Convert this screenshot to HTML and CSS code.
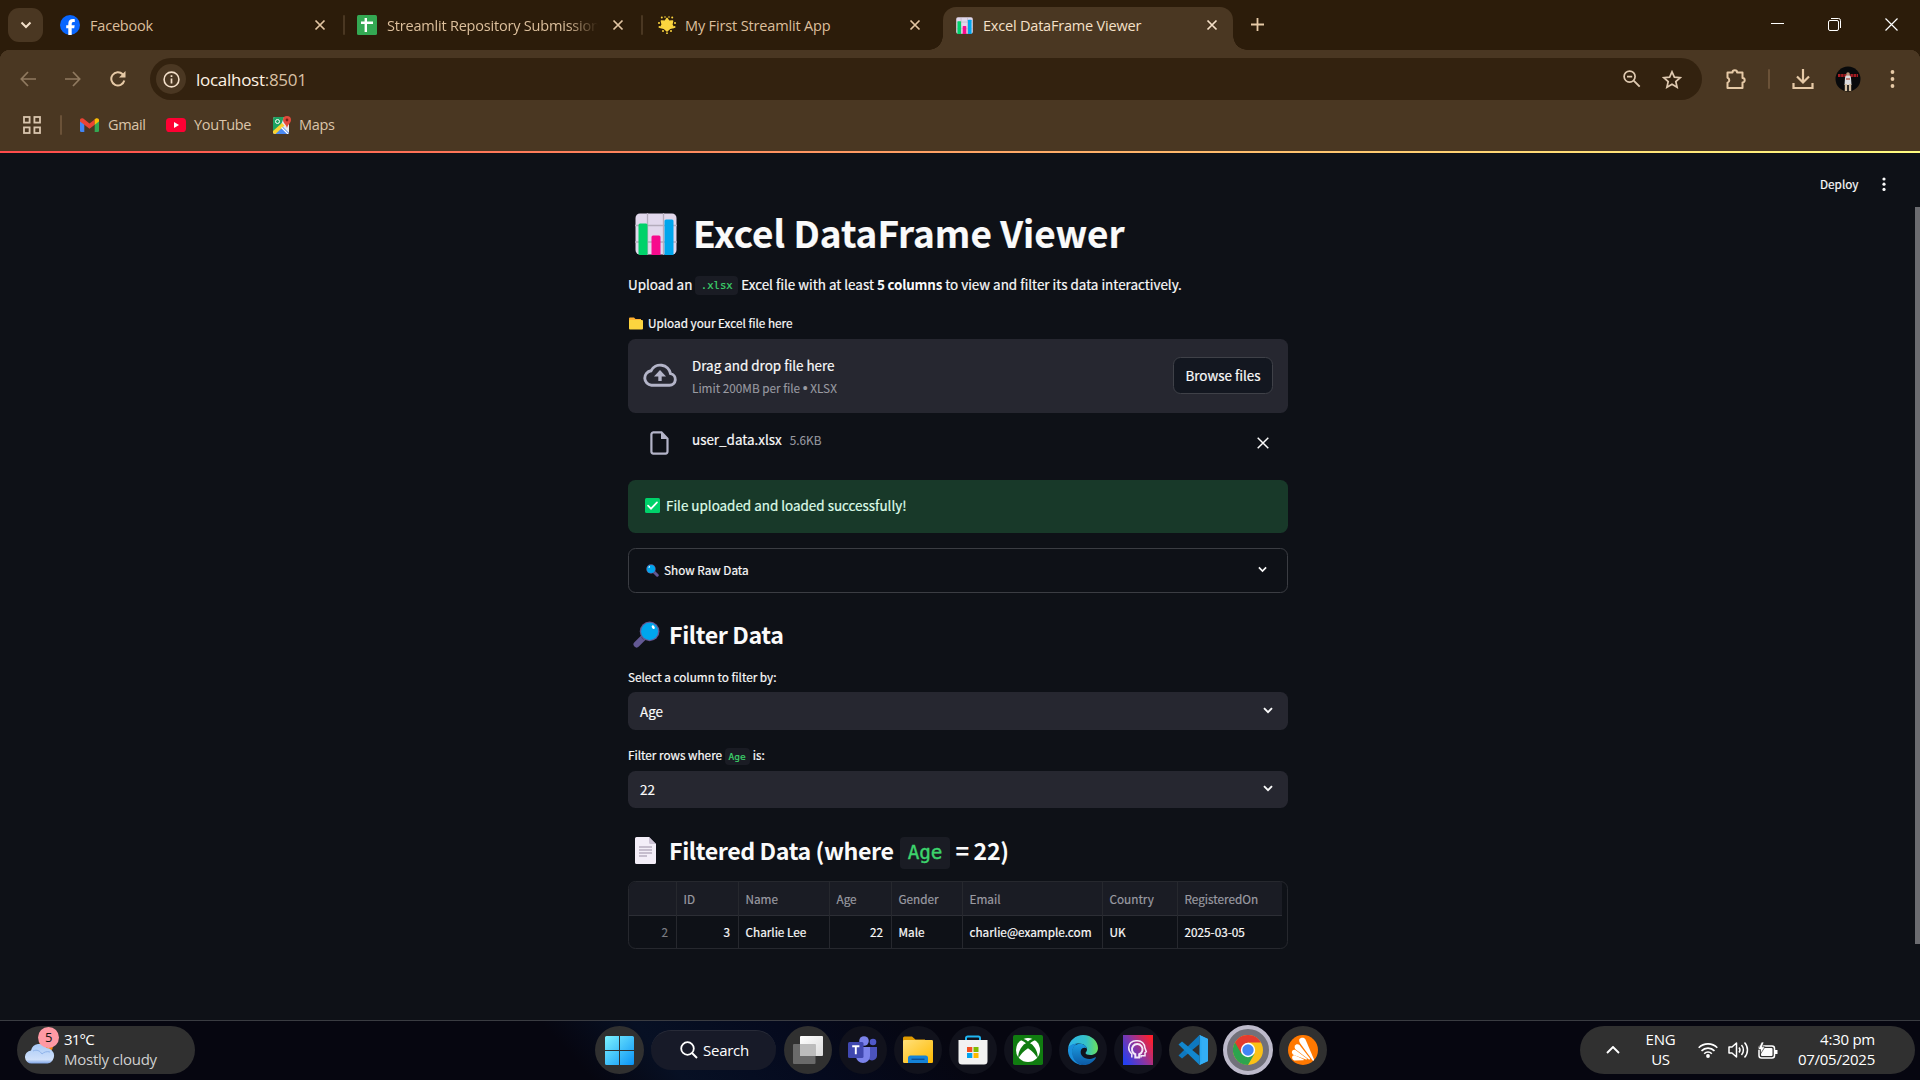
FILE: index.html
```html
<!DOCTYPE html>
<html lang="en">
<head>
<meta charset="utf-8">
<title>Excel DataFrame Viewer</title>
<link rel="stylesheet" href="styles.css">
</head>
<body>
<svg class="defs" width="0" height="0">
  <symbol id="close" viewBox="0 0 12 12"><path d="M1.5 1.5l9 9M10.5 1.5l-9 9" fill="none" stroke="currentColor" stroke-width="1.7"/></symbol>
  <symbol id="chart" viewBox="0 0 42 42"><rect x=".5" y=".5" width="41" height="41" rx="4.500" fill="#e1d8ec"/><path d="M12.500 0v42M28.500 0v42M0 12.500h42M0 29h42" stroke="#b4acbc" stroke-width="1.300"/><path d="M3.500 12a1.500 1.500 0 0 1 1.500-1.500h6a1.500 1.500 0 0 1 1.500 1.500v30h-7.500a1.500 1.500 0 0 1-1.500-1.500z" fill="#00d26a"/><path d="M16.500 24a1.500 1.500 0 0 1 1.500-1.500h6a1.500 1.500 0 0 1 1.500 1.500v18h-9z" fill="#f70a8d"/><path d="M29.500 8a1.500 1.500 0 0 1 1.500-1.500h6a1.500 1.500 0 0 1 1.500 1.500v34h-9z" fill="#00a6ed"/></symbol>
  <symbol id="lens" viewBox="0 0 26 26"><path d="M10.500 15.500L3.500 22.500" stroke="#635994" stroke-width="6" stroke-linecap="round"/><path d="M13 13l-4 4" stroke="#433b6b" stroke-width="3"/><circle cx="16" cy="10" r="9.500" fill="#635994"/><circle cx="16" cy="10" r="8.200" fill="#00a6ed"/><ellipse cx="19.500" cy="6" rx="1.300" ry="1.900" transform="rotate(-35 19.500 6)" fill="#fff"/></symbol>
  <symbol id="chev" viewBox="0 0 10 7"><path d="M1 1.200l4 4 4-4" fill="none" stroke="currentColor" stroke-width="1.900"/></symbol>
</svg>

<header class="tabstrip">
  <button class="tab-search"><svg width="12" height="8" viewBox="0 0 12 8"><path d="M1.500 1.500l4.500 4.500 4.500-4.500" fill="none" stroke="#f3dfc9" stroke-width="2"/></svg></button>
  <div class="tab t-fb">
    <svg width="20" height="20" viewBox="0 0 20 20"><circle cx="10" cy="10" r="10" fill="#0866ff"/><path d="M8.300 20v-6.700H6.200v-3h2.100V8.900c0-3.300 1.500-4.900 4.700-4.900.6 0 1.400.1 1.800.2v2.700h-1c-1.500 0-2.100.6-2.100 2.100v1.300h3l-.5 3h-2.500V20z" fill="#fff"/></svg>
    <span class="tab-title">Facebook</span><svg class="x" width="12" height="12"><use href="#close"/></svg>
  </div>
  <i class="tab-sep"></i>
  <div class="tab t-sheet">
    <svg width="20" height="20" viewBox="0 0 20 20"><rect width="20" height="20" rx="1.500" fill="#34a853"/><path d="M8.800 3v14M4 7.700h12" stroke="#fff" stroke-width="2.400"/></svg>
    <span class="tab-title fade">Streamlit Repository Submission</span><svg class="x" width="12" height="12"><use href="#close"/></svg>
  </div>
  <i class="tab-sep"></i>
  <div class="tab t-app">
    <svg width="18" height="18" viewBox="0 0 18 18"><path d="M9 2.300l2 3 3.600-.3-.8 3.500 1.700 3-3.500.8L9 15l-3-2.700-3.500-.8 1.700-3L3.400 5l3.600.3z" fill="#fcd53f" stroke="#fcd53f" stroke-width="1.500" stroke-linejoin="round"/><g fill="#fcd53f"><circle cx="3.800" cy="1.500" r="1"/><circle cx="7" cy="1" r=".8"/><circle cx="11" cy="1" r=".8"/><circle cx="14.200" cy="1.500" r="1"/><circle cx="1" cy="7" r="1"/><circle cx="17" cy="7" r="1"/><circle cx="1.500" cy="11" r="1"/><circle cx="16.500" cy="11" r="1"/><circle cx="5" cy="15" r="1"/><circle cx="13" cy="15" r="1"/><circle cx="9" cy="17.200" r=".9"/></g></svg>
    <span class="tab-title">My First Streamlit App</span><svg class="x" width="12" height="12"><use href="#close"/></svg>
  </div>
  <div class="tab t-active">
    <svg width="17" height="17"><use href="#chart"/></svg>
    <span class="tab-title">Excel DataFrame Viewer</span><svg class="x" width="12" height="12"><use href="#close"/></svg>
  </div>
  <svg class="plus" width="13" height="13" viewBox="0 0 13 13"><path d="M6.500 0v13M0 6.500h13" stroke="#e6c9a6" stroke-width="1.800"/></svg>
  <div class="winctl">
    <svg width="13" height="13" viewBox="0 0 13 13"><path d="M0 5.500h13" stroke="#fff"/></svg>
    <svg width="13" height="13" viewBox="0 0 13 13"><rect x=".5" y="2.500" width="10" height="10" rx="1.500" fill="none" stroke="#fff"/><path d="M3 .5h7.500a2 2 0 0 1 2 2V10" fill="none" stroke="#fff"/></svg>
    <svg width="13" height="13" viewBox="0 0 13 13"><path d="M.5.5l12 12M12.500.5l-12 12" stroke="#fff" stroke-width="1.200"/></svg>
  </div>
</header>

<section class="chrome">
  <div class="toolbar">
    <div class="nav">
      <svg class="dim" width="16" height="16" viewBox="0 0 16 16"><path d="M16 8H1.500M8 1L1.300 8 8 15" fill="none" stroke="currentColor" stroke-width="1.700"/></svg>
      <svg class="dim" width="16" height="16" viewBox="0 0 16 16"><path d="M0 8h14.500M8 1l6.700 7L8 15" fill="none" stroke="currentColor" stroke-width="1.700"/></svg>
      <svg width="16" height="16" viewBox="0 0 16 16"><path d="M14.300 9.500A6.600 6.600 0 1 1 12.700 3.300L14.500 5" fill="none" stroke="currentColor" stroke-width="2"/><path d="M15.500 0v6.500H9z" fill="currentColor"/></svg>
    </div>
    <div class="urlbar">
      <span class="info"><svg width="17" height="17" viewBox="0 0 17 17"><circle cx="8.500" cy="8.500" r="7.400" fill="none" stroke="#f3dfc9" stroke-width="1.600"/><path d="M8.500 7.500v5M8.500 4.300v1.700" stroke="#f3dfc9" stroke-width="1.700"/></svg></span>
      <span class="url">localhost<em>:8501</em></span>
      <svg class="mag" width="18" height="18" viewBox="0 0 18 18"><circle cx="6.600" cy="6.600" r="5.500" fill="none" stroke="currentColor" stroke-width="1.700"/><path d="M10.700 10.700l6 6M4 6.600h5.200" stroke="currentColor" stroke-width="1.900"/></svg>
      <svg width="20" height="19" viewBox="0 0 20 19"><path d="M10 1.800l2.400 5.300 5.800.5-4.400 3.900 1.300 5.700L10 14.200l-5.100 3 1.300-5.700-4.400-3.900 5.800-.5z" fill="none" stroke="currentColor" stroke-width="1.700"/></svg>
    </div>
    <div class="actions">
      <svg width="22" height="22" viewBox="0 0 22 22"><path d="M2.500 4.500h5a2.300 2.300 0 0 1 4.600 0h5.400v5.600a2 2 0 0 1 0 4.400v5.500H2.500v-5.400a2.500 2.500 0 0 0 0-4.800z" fill="none" stroke="currentColor" stroke-width="2" stroke-linejoin="round"/></svg>
      <i class="vsep"></i>
      <svg width="22" height="22" viewBox="0 0 22 22"><path d="M11 1v13M5 8.500l6 6 6-6M1.500 15v5h19v-5" fill="none" stroke="currentColor" stroke-width="2.200"/></svg>
      <svg class="avatar" width="26" height="26" viewBox="0 0 26 26"><circle cx="13" cy="13" r="12.500" fill="#08090b"/><path d="M3 9.500h20" stroke="#a41c22" stroke-width="3" stroke-dasharray="2.500 .6"/><path d="M10 12c0-2 1-3 3-3s3 1 3 3l.5 7h-7z" fill="#dcdcdf"/><circle cx="13" cy="8" r="1.800" fill="#b98f77"/><path d="M11 18v7M15 18v7" stroke="#d4bfa2" stroke-width="2.400"/><path d="M11 13h4" stroke="#b4564e" stroke-width="1.400"/></svg>
      <svg width="5" height="18" viewBox="0 0 5 18" fill="currentColor"><circle cx="2.500" cy="2" r="1.900"/><circle cx="2.500" cy="9" r="1.900"/><circle cx="2.500" cy="16" r="1.900"/></svg>
    </div>
  </div>
  <nav class="bookmarks">
    <svg width="18" height="18" viewBox="0 0 18 18"><g fill="none" stroke="#d9c5ae" stroke-width="1.800"><rect x="1" y="1" width="5.600" height="5.600"/><rect x="11.400" y="1" width="5.600" height="5.600"/><rect x="1" y="11.400" width="5.600" height="5.600"/><rect x="11.400" y="11.400" width="5.600" height="5.600"/></g></svg>
    <i class="vsep"></i>
    <a class="b1"><svg width="19" height="14" viewBox="0 0 19 14"><path d="M0 3v9.700A1.300 1.300 0 0 0 1.300 14h3V5.500z" fill="#4285f4"/><path d="M14.700 5.500V14h3a1.300 1.300 0 0 0 1.300-1.300V3z" fill="#34a853"/><path d="M0 2v1.500l4.300 3.300 5.200 4 5.200-4V1.500L9.500 5.400 3.300.6C1.900-.4 0 .4 0 2z" fill="#ea4335"/><path d="M14.700 1.500v5.300L19 3.500V2c0-1.600-1.900-2.400-3.300-1.400z" fill="#fbbc04"/></svg><span>Gmail</span></a>
    <a class="b2"><svg width="20" height="14" viewBox="0 0 20 14"><rect width="20" height="14" rx="3.600" fill="#ff0033"/><path d="M8 4v6l5-3z" fill="#fff"/></svg><span>YouTube</span></a>
    <a class="b3"><svg width="18" height="18" viewBox="0 0 18 18"><rect y="1" width="16" height="17" rx="2" fill="#e8eaed"/><path d="M0 3a2 2 0 0 1 2-2h9L8 9 0 16z" fill="#1ea362"/><path d="M1 18l8-8 7 7-1 1z" fill="#4a89f3"/><path d="M0 15l9-8 2.500 2.500L2.500 18H2a2 2 0 0 1-2-2z" fill="#fad231"/><path d="M8.500 11.500L15 18" stroke="#fff" stroke-width="1.200"/><circle cx="4.500" cy="5.500" r="2" fill="none" stroke="#fff"/><path d="M14 0a4 4 0 0 1 4 4c0 3-3 4-4 8-1-4-4-5-4-8a4 4 0 0 1 4-4z" fill="#e14a3b"/><circle cx="14" cy="4" r="1.400" fill="#7d1f17"/></svg><span>Maps</span></a>
  </nav>
</section>

<main class="page">
  <div class="deploy"><span>Deploy</span><svg width="4" height="14" viewBox="0 0 4 14" fill="#fafafa"><circle cx="2" cy="2" r="1.600"/><circle cx="2" cy="7.200" r="1.600"/><circle cx="2" cy="12.400" r="1.600"/></svg></div>
  <i class="scrollbar"></i>
  <div class="col">
    <h1><svg width="42" height="42"><use href="#chart"/></svg><span>Excel DataFrame Viewer</span></h1>
    <p class="lead"><span>Upload an</span> <code>.xlsx</code> <span>Excel file with at least <b>5 columns</b> to view and filter its data interactively.</span></p>
    <div class="label l-up"><svg width="15" height="13" viewBox="0 0 15 13"><path d="M0 1.500A1 1 0 0 1 1 .5h4l1.500 1.500H12V5H0z" fill="#ffb02e"/><rect y="3" width="14" height="9.500" rx="1" fill="#fcd53f"/></svg><span>Upload your Excel file here</span></div>
    <div class="drop">
      <svg width="34" height="24" viewBox="0 0 34 24"><path d="M8.500 22.300h18a5.900 5.900 0 0 0 1-11.700A10.400 10.400 0 0 0 8 7.800a7.300 7.300 0 0 0 .5 14.500z" fill="none" stroke="#b3b4c8" stroke-width="2.900"/><path d="M17 18v-7" stroke="#b3b4c8" stroke-width="3.400"/><path d="M11 13.500L17 7l6 6.500z" fill="#b3b4c8"/></svg>
      <div class="drop-text"><span>Drag and drop file here</span><small>Limit 200MB per file <span class="dot">•</span> XLSX</small></div>
      <button>Browse files</button>
    </div>
    <div class="file">
      <svg width="19" height="24" viewBox="0 0 19 24"><path d="M3 1.400h8.500l6 6.200V20.600a2 2 0 0 1-2 2H3.400a2 2 0 0 1-2-2V3.400a2 2 0 0 1 2-2z" fill="none" stroke="#b3b4c8" stroke-width="2.200"/><path d="M11 1v7h7z" fill="#b3b4c8"/></svg>
      <span class="fname">user_data.xlsx</span><small>5.6KB</small>
      <svg class="fx" width="12" height="12" viewBox="0 0 12 12"><path d="M.7.7l10.600 10.600M11.300.7L.7 11.300" stroke="#fafafa" stroke-width="1.500"/></svg>
    </div>
    <div class="success"><svg width="15" height="15" viewBox="0 0 15 15"><rect width="15" height="15" rx="1.500" fill="#00d26a"/><path d="M3 7.700l3 3 6-6.400" fill="none" stroke="#fff" stroke-width="1.700" stroke-linecap="round"/></svg><span>File uploaded and loaded successfully!</span></div>
    <div class="expander"><svg class="flip" width="13" height="13"><use href="#lens"/></svg><span>Show Raw Data</span><svg class="chev" width="9" height="7"><use href="#chev"/></svg></div>
    <h3 class="h-filter"><svg width="27" height="27"><use href="#lens"/></svg><span>Filter Data</span></h3>
    <div class="label l-col"><span>Select a column to filter by:</span></div>
    <div class="select"><span>Age</span><svg class="chev" width="10" height="7"><use href="#chev"/></svg></div>
    <div class="label l-row"><span>Filter rows where</span><code>Age</code><span>is:</span></div>
    <div class="select s2"><span>22</span><svg class="chev" width="10" height="7"><use href="#chev"/></svg></div>
    <h3 class="h-data"><svg width="21" height="27" viewBox="0 0 21 27"><path d="M0 1.500A1.500 1.500 0 0 1 1.500 0H14l7 7v18.500a1.500 1.500 0 0 1-1.500 1.500h-18A1.500 1.500 0 0 1 0 25.500z" fill="#f3eef8"/><path d="M14 0l7 7h-5.500A1.500 1.500 0 0 1 14 5.500z" fill="#cdc4d6"/><path d="M4 10h13M4 13h13M4 16h13M4 19h8" stroke="#998ea4" stroke-width="1"/></svg><span>Filtered Data (where</span><code>Age</code><span>= 22)</span></h3>
    <div class="grid">
      <div class="r head"><span></span><span>ID</span><span>Name</span><span>Age</span><span>Gender</span><span>Email</span><span>Country</span><span>RegisteredOn</span></div>
      <div class="r"><span class="n idx">2</span><span class="n">3</span><span>Charlie Lee</span><span class="n">22</span><span>Male</span><span>charlie@example.com</span><span>UK</span><span>2025-03-05</span></div>
    </div>
  </div>
</main>

<footer class="taskbar">
  <div class="weather">
    <span class="cloud"><svg width="30" height="26" viewBox="0 0 30 26"><defs><linearGradient id="cl" x2="0" y2="1"><stop offset="0" stop-color="#a9caf7"/><stop offset=".8" stop-color="#cfe0fa"/><stop offset="1" stop-color="#7fa5e6"/></linearGradient></defs><circle cx="21" cy="8" r="7" fill="#f7830f"/><path d="M7 25.500a6.500 6.500 0 0 1-1-13A8.500 8.500 0 0 1 21.500 10 7.800 7.800 0 0 1 22.500 25.500z" fill="url(#cl)"/><path d="M8 13c4-2 7 0 9 3 2-2 5-3 8-2" fill="none" stroke="#8fb3ea"/></svg><b class="badge">5</b></span>
    <span class="wtext"><span>31°C</span><span class="sub">Mostly cloudy</span></span>
  </div>
  <div class="dock">
    <span class="app lit"><svg width="29" height="29" viewBox="0 0 29 29"><defs><linearGradient id="win" x2="1" y2="1"><stop offset="0" stop-color="#7df3ff"/><stop offset="1" stop-color="#0a93f5"/></linearGradient></defs><path d="M1.500 0H14v14H0V1.500A1.500 1.500 0 0 1 1.500 0zM15 0h12.500A1.500 1.500 0 0 1 29 1.500V14H15zM0 15h14v14H1.500A1.500 1.500 0 0 1 0 27.500zM15 15h14v12.500a1.500 1.500 0 0 1-1.500 1.500H15z" fill="url(#win)"/></svg></span>
    <span class="search"><svg width="18" height="18" viewBox="0 0 18 18"><circle cx="7.500" cy="7.500" r="6.300" fill="none" stroke="#fff" stroke-width="1.800"/><path d="M12 12l5 5" stroke="#fff" stroke-width="2"/></svg><span>Search</span></span>
    <span class="app lit"><svg width="30" height="28" viewBox="0 0 30 28"><defs><linearGradient id="tv" x2="1" y2="1"><stop offset="0" stop-color="#fff"/><stop offset="1" stop-color="#dcdcdc"/></linearGradient></defs><rect x="7" y="0" width="23" height="20" rx="1" fill="url(#tv)"/><rect x="0" y="8" width="22.500" height="20" rx="1" fill="#7d7d7d" opacity=".75"/><rect x="7" y="8" width="15.500" height="12" fill="#bcbcbc"/></svg></span>
    <span class="app"><svg width="30" height="28" viewBox="0 0 30 28"><circle cx="25" cy="6" r="3.300" fill="#5059c9"/><path d="M19 11h10v8.500a5 5 0 0 1-10 0z" fill="#4b53bc"/><circle cx="16" cy="5" r="4.800" fill="#7b83eb"/><path d="M9 11h13v9a7 7 0 0 1-14 0z" fill="#7b83eb"/><rect x="0" y="6" width="15.500" height="16" rx="1.500" fill="#4048b0"/><path d="M4.200 10.300h7.200M7.800 10.300v8" stroke="#fff" stroke-width="1.900"/></svg></span>
    <span class="app"><svg width="30" height="28" viewBox="0 0 30 28"><defs><linearGradient id="fo" x2="1" y2="1"><stop offset="0" stop-color="#ffe07a"/><stop offset="1" stop-color="#ffb900"/></linearGradient></defs><path d="M0 2a1.500 1.500 0 0 1 1.500-1.500H9l3.500 3H22V9H0z" fill="#e09b00"/><rect y="4" width="30" height="23" rx="1.200" fill="url(#fo)"/><path d="M5 27v-5a2.500 2.500 0 0 1 2.500-2.500h15A2.500 2.500 0 0 1 25 22v5z" fill="#1583d8"/><path d="M8.500 23.300h13" stroke="#0b4f95" stroke-width="1.400"/></svg></span>
    <span class="app"><svg width="30" height="30" viewBox="0 0 30 30"><path d="M8 7V3.200A1.700 1.700 0 0 1 9.700 1.500h10.600A1.700 1.700 0 0 1 22 3.200V7" fill="none" stroke="#1fb6f2" stroke-width="2"/><path d="M.5 5h29v21a3.500 3.500 0 0 1-3.500 3.500H4A3.500 3.500 0 0 1 .5 26z" fill="#f2f2f2"/><path d="M9 12h5.300v5H9z" fill="#f25022"/><path d="M15.500 12h5v5h-5z" fill="#7fba00"/><path d="M9 18h5.300v5H9z" fill="#00a4ef"/><path d="M15.500 18h5v5h-5z" fill="#ffb900"/></svg></span>
    <span class="app"><svg width="30" height="30" viewBox="0 0 30 30"><rect width="30" height="30" rx="1.800" fill="#107c10"/><circle cx="15" cy="15" r="12" fill="#fff"/><path d="M15 6.500C11.500 3 8 3 6.500 5c3 .3 6 2.500 8.500 5 2.500-2.500 5.500-4.700 8.500-5-1.500-2-5-2-8.500 1.500z" fill="#107c10"/><path d="M10.800 9.500C6 14.500 4.800 20 5.500 23.500 7 20 11.500 15.500 15 13.300c3.500 2.200 8 6.700 9.500 10.200.700-3.500-.5-9-5.300-14l-4.200-2.500z" fill="#107c10"/></svg></span>
    <span class="app"><svg width="30" height="30" viewBox="0 0 30 30"><defs><linearGradient id="e1"><stop offset="0" stop-color="#2cb5ea"/><stop offset=".6" stop-color="#35c1c8"/><stop offset="1" stop-color="#6be05a"/></linearGradient><linearGradient id="e2" x2="0" y2="1"><stop offset="0" stop-color="#1b9de2"/><stop offset="1" stop-color="#0c59a4"/></linearGradient></defs><path d="M0 14C1 5 8 0 15 0c9 0 15 6.500 15 13 0 4.500-3.500 7-7.500 7-3 0-5-.8-5-2 0-.9 1.500-1.300 1.500-3.500 0-3-3-6-8-6C5.500 8.500 1 11 0 14z" fill="url(#e1)"/><path d="M0 14C1 10.500 5 8.300 10 8.500c-3 1-5.500 4-5.500 8C4.500 23 9.500 30 17 30h-2C6 30-.7 22 0 14z" fill="#1a8fdb"/><path d="M10 9c4-.8 8 1 9 4.500-2-1.200-5-.8-6 1.500-1.800 5 3.500 9.500 9 9 2.300-.2 4-.9 5.300-1.700.4-.2.800.2.500.6C25.500 27 21 30 16 30 8.500 30 4 23.500 4 17c0-4 2.300-7.200 6-8z" fill="url(#e2)"/></svg></span>
    <span class="app"><svg width="30" height="30" viewBox="0 0 30 30"><defs><linearGradient id="ai" x1="0" y1=".8" x2="1" y2=".2"><stop offset="0" stop-color="#2440f0"/><stop offset=".5" stop-color="#8c35a0"/><stop offset="1" stop-color="#ff1f2d"/></linearGradient></defs><rect width="30" height="30" fill="url(#ai)"/><path d="M8.800 22.500v-3.700A8 8 0 0 1 5.700 12.500C5.700 8.500 9 5.800 13 5.800h1.500c4.200 0 7.200 2.900 7.300 6.700l1.500 4.300-1.300.8v3.200H18v1.700" fill="none" stroke="#f4e9f7" stroke-width="1.500"/><path d="M12.300 22.500v-3.300a5.300 5.300 0 1 1 3.900 0v3.300z" fill="none" stroke="#f4e9f7" stroke-width="2"/></svg></span>
    <span class="app lit"><svg width="30" height="30" viewBox="0 0 30 30"><path d="M21.500 0L30 4v22l-8.500 4z" fill="#29a9f2"/><path d="M21.500 0v9L4 23.500.5 20.500z" fill="#0e78c0"/><path d="M21.500 30v-9L4 6.500.5 9.500z" fill="#1287cf"/><path d="M21.500 0l2 5v20l-2 5 8.500-4V4z" fill="#33aef5"/></svg></span>
    <span class="app current"><svg width="30" height="30" viewBox="0 0 30 30"><circle cx="15" cy="15" r="15" fill="#fbc116"/><path d="M15 15L2 7.500A15 15 0 0 0 15 30l6.500-11.300z" fill="#2da44e"/><path d="M2 7.500A15 15 0 0 1 28 7.500H15L8.500 18.700z" fill="#e33b2e"/><circle cx="15" cy="15" r="7.200" fill="#fff"/><circle cx="15" cy="15" r="5.700" fill="#4285f4"/></svg></span>
    <span class="app lit"><svg width="30" height="30" viewBox="0 0 30 30"><circle cx="15" cy="15" r="15" fill="#ff7800"/><g fill="#fff"><path d="M11.500 4c1.700-2 5-1.700 6 .5L26 24.500c.3 1-.6 1.600-1.300.9L12.300 8.500C11.300 7 10.800 5.300 11.500 4z"/><path d="M7 10.500c1-1.600 3.200-1.800 4.500-.5L22 23.500c.3.900-.5 1.300-1.100.9L8 14.800c-1.300-1-1.800-2.800-1-4.300z"/><path d="M4.300 15.800c.8-1 2.300-1.300 3.500-.5l11 8.300c.4.700-.1 1.200-.8 1L5.800 20c-1.700-.8-2.500-2.800-1.500-4.200z"/><path d="M4.500 21c.6-.7 1.600-.9 2.600-.5l8.400 3.700c.5.400.3 1-.4 1l-8 .3c-2.300 0-3.700-2.800-2.600-4.500z"/></g></svg></span>
  </div>
  <div class="tray">
    <svg class="up" width="14" height="8" viewBox="0 0 14 8"><path d="M1 7l6-6 6 6" fill="none" stroke="#fff" stroke-width="1.900"/></svg>
    <span class="lang"><span>ENG</span><span>US</span></span>
    <svg class="wifi" width="20" height="16" viewBox="0 0 20 16"><g fill="none" stroke="#fff" stroke-width="1.600"><path d="M.7 5.800a13 13 0 0 1 18.600 0M3.500 8.900a9 9 0 0 1 13 0M6.200 11.700a5.200 5.200 0 0 1 7.600 0"/></g><circle cx="10" cy="14" r="1.900" fill="#fff"/></svg>
    <svg class="vol" width="21" height="18" viewBox="0 0 21 18"><g fill="none" stroke="#fff" stroke-width="1.500"><path d="M1 6h3l4.500-4v14L4 12H1z" stroke-linejoin="round"/><path d="M11 6.500a4 4 0 0 1 0 5M13.500 4a7.500 7.500 0 0 1 0 10M16.500 1.500a11 11 0 0 1 0 15"/></g></svg>
    <svg class="bat" width="20" height="17" viewBox="0 0 20 17"><rect x="1" y="4" width="15.500" height="12" rx="2.500" fill="none" stroke="#fff" stroke-width="1.500"/><rect x="3" y="6" width="11.500" height="8" rx="1" fill="#fff"/><path d="M18 8v4" stroke="#fff" stroke-width="3"/><path d="M3.500 0L0 7.500h2.500V12L7 4.800H4.300L6 0z" fill="#fff" stroke="#303030" stroke-width=".7"/></svg>
    <span class="clock"><span>4:30 pm</span><span>07/05/2025</span></span>
  </div>
</footer>
</body>
</html>
```
FILE: styles.css
```css
* { box-sizing: border-box; }
body { margin: 0; width: 1920px; height: 1080px; overflow: hidden; background: #0e1117; display: flex; flex-direction: column; font-family: "Open Sans", "Noto Sans", sans-serif; }
svg { display: block; flex: none; }
.defs { position: absolute; }
i { flex: none; }
button { font: inherit; border: 0; padding: 0; }

/* tab strip */
.tabstrip { height: 50px; flex: none; background: #2c1c0a; display: flex; align-items: flex-start; padding-left: 8px; color: #dcbf9c; font-size: 14.500px; letter-spacing: -.2px; }
.tab-search { width: 35px; height: 34px; margin-top: 8px; border-radius: 11px; background: #4a3722; display: grid; place-items: center; }
.tab { height: 50px; display: flex; align-items: center; }
.tab-title { margin-left: 10px; white-space: nowrap; flex: none; }
.tab .x { margin-left: auto; color: #e2c5a3; }
.t-fb { width: 283px; margin-left: 17px; padding-right: 17px; }
.tab-sep { width: 2px; height: 20px; margin-top: 15px; background: #4a3722; border-radius: 1px; }
.t-sheet { width: 296px; padding: 0 17px 0 12px; }
.fade { width: 213px; margin-right: -3px; overflow: hidden; -webkit-mask-image: linear-gradient(90deg, #000 180px, transparent 211px); mask-image: linear-gradient(90deg, #000 180px, transparent 211px); }
.t-app { width: 300px; padding: 0 22px 0 15px; }
.t-app .tab-title { margin-left: 9px; letter-spacing: -.15px; }
.t-active { width: 290px; height: 43px; margin-top: 7px; padding: 0 15px 7px 13px; border-radius: 13px 13px 0 0; background: #4a3722; color: #f5e0c8; position: relative; }
.t-active .x { color: #f5e0c8; }
.t-active::before, .t-active::after { content: ""; position: absolute; bottom: 0; width: 14px; height: 14px; }
.t-active::before { left: -14px; background: radial-gradient(circle at 0 0, transparent 13.500px, #4a3722 14px); }
.t-active::after { right: -14px; background: radial-gradient(circle at 100% 0, transparent 13.500px, #4a3722 14px); }
.plus { margin: 18px 0 0 18px; }
.winctl { margin: 18px 22px 0 auto; display: flex; gap: 44px; }

/* toolbar and bookmarks */
.chrome { height: 103px; flex: none; background: linear-gradient(90deg, #ff4b4b, #fffd80) 0 100% / 100% 2px no-repeat, radial-gradient(circle at 10px 10px, #4a3722 10px, #2c1c0a 10.500px) 0 0 / 10px 10px no-repeat, radial-gradient(circle at 0 10px, #4a3722 10px, #2c1c0a 10.500px) 100% 0 / 10px 10px no-repeat, #4a3722; padding-top: 8px; }
.toolbar { height: 42px; display: flex; align-items: center; color: #e6c9a6; }
.nav { width: 150px; padding-left: 20px; display: flex; gap: 29px; }
.nav .dim { color: #907a60; }
.urlbar { width: 1552px; height: 42px; border-radius: 21px; background: #33220f; display: flex; align-items: center; padding: 0 20px 0 6px; color: #dfc9b0; }
.info { width: 30px; height: 30px; border-radius: 50%; background: #4a3722; display: grid; place-items: center; }
.url { margin-left: 10px; font-size: 17px; letter-spacing: -.28px; color: #fff3e4; }
.url em { font-style: normal; color: #d8c0a4; }
.mag { margin: 0 21px 0 auto; }
.actions { flex: 1; display: flex; align-items: center; padding-left: 23px; }
.vsep { width: 2px; height: 20px; background: #6b5238; border-radius: 1px; }
.actions .vsep { margin: 0 22px 0 21px; }
.avatar { margin: 0 29px 0 21px; }
.bookmarks { height: 50px; display: flex; align-items: center; padding-left: 23px; color: #dcc5aa; font-size: 14.500px; letter-spacing: -.35px; }
.bookmarks span { padding-bottom: 2px; }
.bookmarks .vsep { margin: 0 18px 0 19px; }
.bookmarks a { display: flex; align-items: center; gap: 9px; }
.b1 { width: 86px; }
.b2 { width: 107px; }
.b2 span { margin-left: -1px; }
.b3 span { margin-left: -1px; }

/* app page */
.page { flex: 1; position: relative; font-family: "Noto Sans CJK SC", sans-serif; font-size: 13.430px; color: #fafafa; -webkit-text-stroke: .2px currentColor; }
.page svg { -webkit-text-stroke: 0; }
.deploy { position: absolute; left: 1820px; top: 21px; height: 20px; display: flex; align-items: center; gap: 24px; font-size: 11.750px; }
.deploy span { padding-bottom: 1px; }
.scrollbar { position: absolute; right: 0; top: 54px; width: 5px; height: 737px; background: #6b6c70; }
.col { width: 660px; margin-left: 628px; padding-top: 58px; }
h1, h3, p { margin: 0; }
h1 { height: 42px; display: flex; align-items: center; padding-left: 7px; font-size: 36.900px; line-height: 42px; font-weight: 700; }
h1 svg { margin: 3px 16px 0 0; }
code { font-family: "DejaVu Sans Mono", monospace; color: #3dd56d; background: #1a1c24; border-radius: 4px; }
.lead { margin-top: 19px; height: 24px; line-height: 24px; display: flex; align-items: center; white-space: pre; }
.lead b { letter-spacing: -.2px; -webkit-text-stroke: 0; }
.lead code { margin: 2px 3px 0 3px; padding: 0 5.500px; height: 19px; line-height: 19px; font-size: 10.600px; }
.label { height: 20px; line-height: 20px; display: flex; align-items: center; font-size: 11.750px; }
.l-up { margin-top: 17px; }
.l-up svg { margin: 0 4px 0 1px; }
.drop { margin-top: 6px; height: 74px; border-radius: 7.500px; background: #262730; display: flex; align-items: center; padding: 0 15px; }
.drop > svg { margin-top: -2px; }
.drop-text { margin: 0 auto 0 15px; display: flex; flex-direction: column; line-height: 22px; }
.drop-text small, .file small { font-size: 11.750px; color: #9a9ba2; -webkit-text-stroke: .1px currentColor; }
.drop-text small { padding-top: 1px; margin-bottom: -1px; }
.dot { font-family: "Liberation Sans", sans-serif; font-size: 14px; line-height: 1; }
.drop button { width: 100px; height: 37px; margin-top: -1px; padding-bottom: 1px; border: 1px solid #3f4148; border-radius: 7.500px; background: #131720; color: #fafafa; }
.file { margin-top: 17px; height: 26px; display: flex; align-items: center; padding: 0 19px 0 22px; }
.fname { margin: -8px 8px 0 23px; }
.file small { margin-top: -7px; }
.fx { margin: -1px 0 0 auto; }
.success { margin-top: 24px; height: 53px; border-radius: 7.500px; background: #183929; color: #dffde9; display: flex; align-items: center; gap: 6px; padding: 0 0 2px 17px; }
.success span { padding-bottom: 1px; }
.expander { margin-top: 15px; height: 45px; border: 1px solid #3b3d43; border-radius: 7.500px; display: flex; align-items: center; gap: 5px; padding: 0 20px 1px 17px; font-size: 11.750px; }
.expander span { padding-bottom: 1px; }
.flip { transform: scaleX(-1); }
.chev { margin: -2px 0 0 auto; }
.select .chev { margin-top: -1px; }
h3 { height: 32px; line-height: 32px; display: flex; align-items: center; font-size: 23.200px; font-weight: 600; letter-spacing: -.4px; -webkit-text-stroke: 0; }
.h-filter { margin-top: 25px; padding-left: 5px; gap: 9px; }
.l-col { margin-top: 17px; }
.select { margin-top: 5px; height: 38px; border-radius: 7.500px; background: #262730; display: flex; align-items: center; padding: 0 15px 0 12px; }
.l-row { margin-top: 15px; }
.l-row code { margin: 2px 3px 0 2.500px; padding: 0 4px; height: 17px; line-height: 17px; font-size: 9.500px; }
.s2 { height: 37px; margin-top: 6px; padding-bottom: 1px; }
.h-data { margin-top: 26px; padding-left: 7px; }
.h-data svg { margin: 1px 13px 0 0; }
.h-data code { margin: 5px 5px 0 6px; padding: 0 8px; height: 32px; line-height: 32px; font-size: 19.300px; letter-spacing: 0; font-weight: 400; -webkit-text-stroke: .4px currentColor; }
.grid { margin-top: 15px; height: 68px; border: 1px solid #26282e; border-radius: 7.500px; overflow: hidden; font-size: 11.750px; }
.r { width: 653px; height: 32px; display: grid; grid-template-columns: 48px 62px 91px 62px 71px 140px 75px 104px; line-height: 32px; }
.r span { padding: 0 7px 0 6.500px; border-right: 1px solid #26282e; }
.r span:last-child { border-right: 0; }
.head { background: #1a1c24; color: #9a9ba2; height: 34px; border-bottom: 1px solid #2c2e35; line-height: 34px; }
.r .n { text-align: right; padding-right: 8px; }
.r .idx { color: #7c7d83; }

/* taskbar */
.taskbar { height: 60px; flex: none; border-top: 1px solid #3a3c42; background: linear-gradient(48deg, transparent 22%, #071024 30%, #050a1e 42%, transparent 56%) 340px 0 / 1100px 60px no-repeat, #060610; display: flex; align-items: center; padding: 0 5px 1px 17px; color: #fff; font-size: 15px; line-height: 20px; letter-spacing: -.25px; }
.weather { width: 178px; height: 48px; border-radius: 24px; background: #303030; display: flex; align-items: center; padding-left: 8px; }
.cloud { position: relative; padding-top: 2px; margin-top: -1px; }
.badge { position: absolute; left: 13px; top: -9px; width: 21px; height: 21px; border-radius: 50%; background: #ff99a4; color: #111; font-size: 13px; font-weight: 400; line-height: 21px; text-align: center; }
.wtext { margin-left: 9px; display: flex; flex-direction: column; align-items: flex-start; padding-bottom: 3px; }
.wtext span:first-child { letter-spacing: -.8px; }
.sub { color: #cfcfcf; }
.dock { margin-left: 400px; display: flex; align-items: center; }
.app { width: 48px; height: 48px; margin-right: 7px; border-radius: 50%; background: #11121c; display: grid; place-items: center; }
.lit { background: #303030; }
.current { width: 50px; height: 50px; margin: 0 6px 0 -1px; background: #71717a; border: 4px solid #bdbacb; }
.app:first-child { width: 49px; margin-right: 6px; }
.search { width: 125px; height: 40px; margin: 0 8px 0 1px; border-radius: 20px; background: #171a28; border-top: 1px solid #282b38; display: flex; align-items: center; padding: 0 0 2px 29px; gap: 5px; }
.tray { margin-left: auto; width: 335px; height: 48px; border-radius: 24px; background: #303030; display: flex; align-items: center; padding: 0 40px 0 26px; }
.lang { width: 29px; margin-left: 26px; display: flex; flex-direction: column; align-items: center; padding-bottom: 2px; }
.wifi { margin-left: 23px; }
.vol { margin-left: 10px; }
.bat { margin-left: 9px; }
.clock { margin-left: auto; display: flex; flex-direction: column; align-items: flex-end; padding-bottom: 3px; }
```
